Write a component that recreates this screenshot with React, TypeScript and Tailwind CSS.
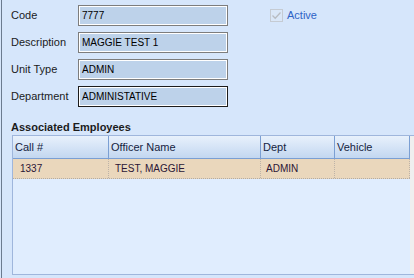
import React from "react";

const FIELDS = [
  { label: "Code", value: "7777" },
  { label: "Description", value: "MAGGIE TEST 1" },
  { label: "Unit Type", value: "ADMIN" },
  { label: "Department", value: "ADMINISTATIVE", focused: true },
];

const COLS = [
  { name: "Call #", w: "w-[96px]", pad: "pl-[7px]" },
  { name: "Officer Name", w: "w-[152px]", pad: "pl-[6px]" },
  { name: "Dept", w: "w-[74px]", pad: "pl-[5px]" },
  { name: "Vehicle", w: "w-[75px]", pad: "pl-[5px]" },
];

const ROWS = [["1337", "TEST, MAGGIE", "ADMIN", ""]];

function Field({ label, value, focused, children }: { label: string; value: string; focused?: boolean; children?: React.ReactNode }) {
  return (
    <div className="flex items-center h-[21px]">
      <span className="w-[67px] text-[11px] text-[#1b1b1b]">{label}</span>
      <div
        className={`w-[150px] h-[21px] border ${
          focused ? "border-[#1c1c1c]" : "border-[#7d7d7d]"
        }`}
      >
        <div className="h-full border border-white bg-[#bdd2ea] pl-[2px] flex items-center text-[10px] text-black">
          {value}
        </div>
      </div>
      {children}
    </div>
  );
}

export default function App() {
  return (
    <div className="w-[414px] h-[278px] overflow-hidden bg-[#d6e6fb] pl-px font-['Liberation_Sans',Arial,sans-serif]">
      <div className="h-full border-l border-[#6b7b8f] flex flex-col">
        {/* form fields */}
        <div className="pt-[5px] pl-[9px] flex flex-col gap-[6px]">
          {FIELDS.map((f, i) => (
            <Field key={f.label} label={f.label} value={f.value} focused={f.focused}>
              {i === 0 && (
                <div className="ml-[42px] flex items-center gap-[4px]">
                  <div className="w-[13px] h-[13px] border border-[#c5cbd3] bg-[#dae7f8] flex items-center justify-center">
                    <svg width="11" height="11" viewBox="0 0 11 11">
                      <path d="M1.5 5.5 L4.2 8.2 L9.5 2.5" fill="none" stroke="#b8bcc2" strokeWidth="1.3" />
                    </svg>
                  </div>
                  <span className="text-[11px] text-[#2e63c6]">Active</span>
                </div>
              )}
            </Field>
          ))}
        </div>

        {/* associated employees */}
        <div className="mt-[12px] pl-[9px] h-[16px] leading-[16px] text-[11px] font-bold text-[#1b1b1b]">
          Associated Employees
        </div>

        <div className="ml-[10px] mb-[3px] flex-1 flex border-l border-t border-b border-[#9fb6dc] bg-[#e0edfe]">
          <div className="w-[397px] flex flex-col">
            <div className="flex h-[23px] border-b border-[#7b9fd3] bg-gradient-to-b from-[#e8f1fc] to-[#c3d7f0]">
              {COLS.map((c) => (
                <div
                  key={c.name}
                  className={`${c.w} h-full border-r border-[#7b9fd3] pl-[2px] flex items-center text-[11px] text-[#15233f]`}
                >
                  {c.name}
                </div>
              ))}
            </div>
            {ROWS.map((r, ri) => (
              <div key={ri} className="flex h-[20px] border-b border-dotted border-[#b3aca4] bg-[#ead7bc]">
                {r.map((cell, ci) => (
                  <div
                    key={ci}
                    className={`${COLS[ci].w} ${COLS[ci].pad} h-full border-r border-dotted border-[#bdb3a8] flex items-center text-[10px] text-[#2a1636]`}
                  >
                    {cell}
                  </div>
                ))}
              </div>
            ))}
          </div>
          <div className="w-[4px] bg-[#efefef]" />
        </div>
      </div>
    </div>
  );
}
